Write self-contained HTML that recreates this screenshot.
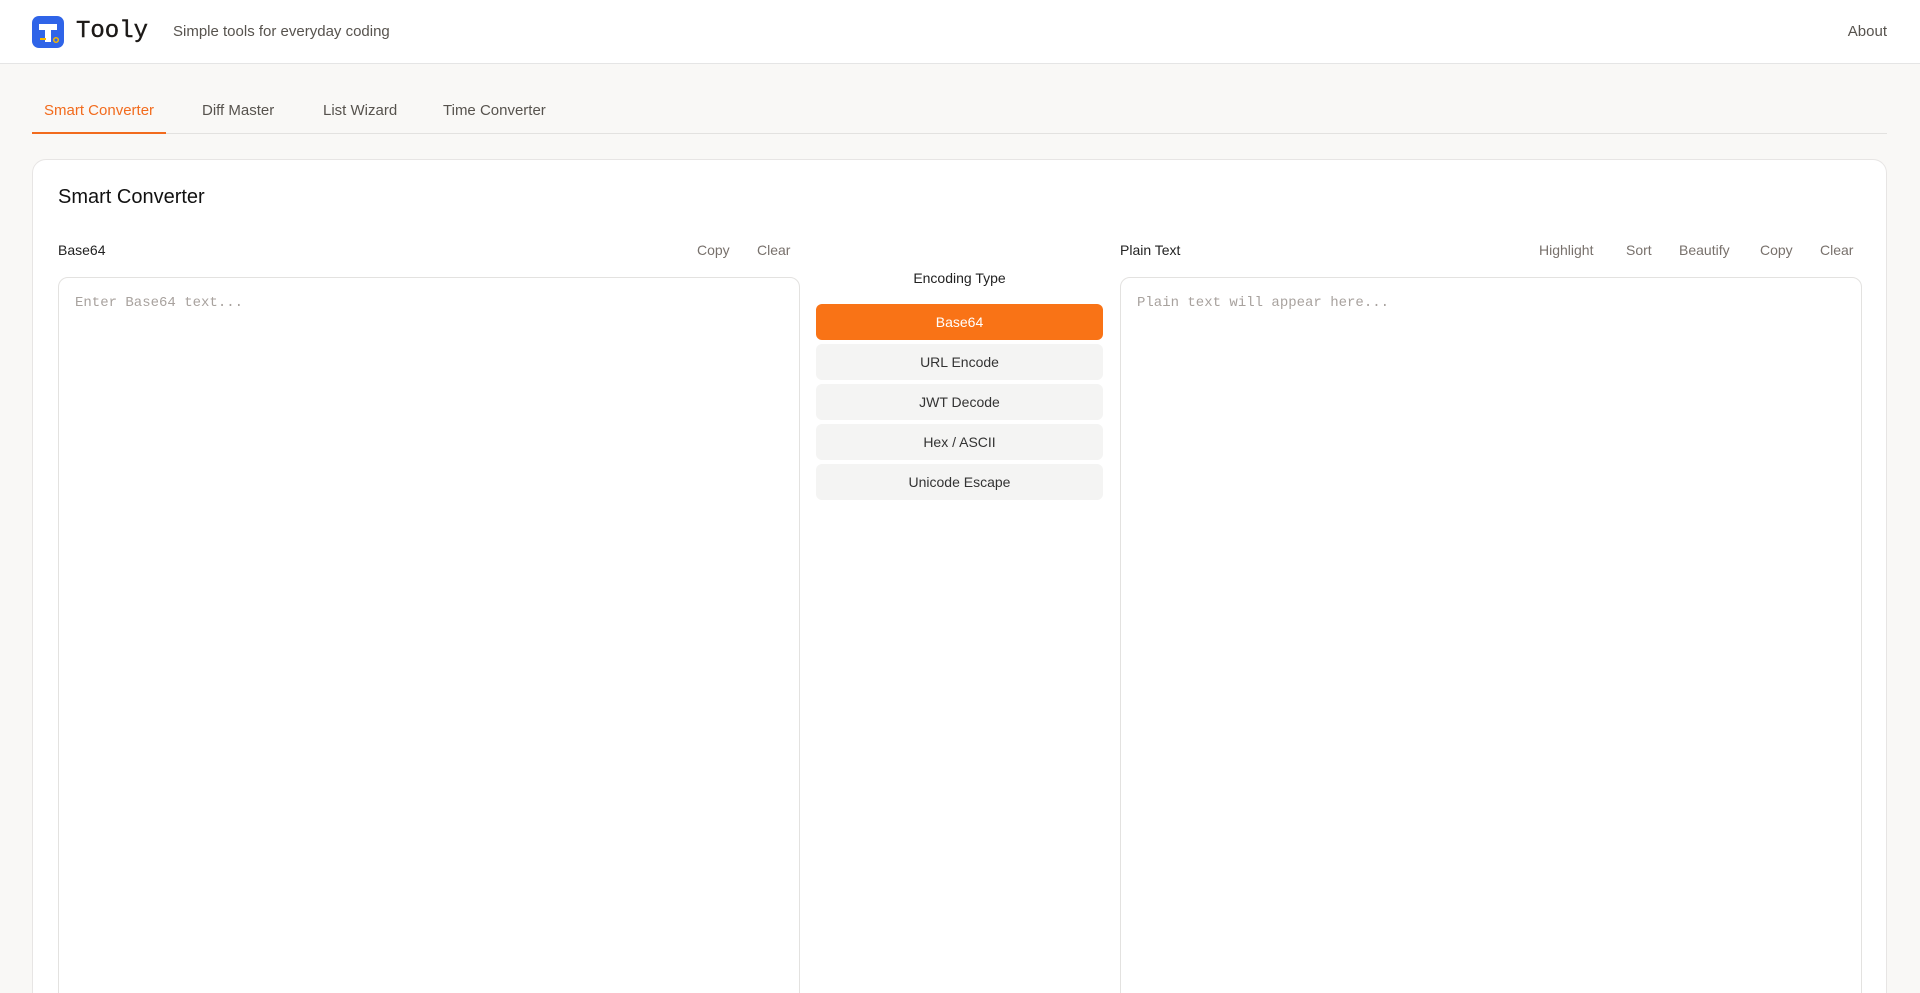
<!DOCTYPE html>
<html style="height:993px;overflow:hidden"><head><meta charset="utf-8"><style>
*{box-sizing:border-box;margin:0;padding:0}
body{width:1920px;height:993px;overflow:hidden;position:relative;background:#f9f8f6;font-family:"Liberation Sans",sans-serif;color:#1c1917}
.hdr{height:64px;background:#fff;border-bottom:1px solid #e5e5e5;position:relative}
.abs{position:absolute;white-space:nowrap}
.tabs{position:absolute;top:133px;left:32px;right:33px;border-top:1px solid #e3e2e0}
.card{position:absolute;left:32px;top:159px;width:1855px;height:860px;background:#fff;border:1px solid #e7e5e4;border-radius:14px}
.ta{position:absolute;top:277px;height:760px;background:#fff;border:1px solid #e3e2e0;border-radius:10px}
.ph{position:absolute;left:16px;top:17px;font-family:"Liberation Mono",monospace;font-size:14px;color:#a8a29e}
.btn{position:absolute;left:816px;width:287px;height:36px;border-radius:6px;background:#f4f4f3;color:#333;font-size:15px;text-align:center;line-height:36px}
.lbl{font-size:15px;color:#222}
.act{font-size:15px;color:#78716c}
</style></head><body>
<div class="hdr">
 <svg class="abs" style="left:32px;top:16px" width="32" height="32" viewBox="0 0 32 32"><rect width="32" height="32" rx="7" fill="#2f64e8"/><path d="M7 8h18v6h-6v12h-6V14H7z" fill="#fff"/><rect x="8" y="22" width="6" height="2" fill="#f5b800"/><circle cx="24" cy="24" r="2.3" fill="none" stroke="#f5b800" stroke-width="1.5"/></svg>
 <div class="abs" style="left:76px;top:18px;font-family:'Liberation Mono',monospace;font-size:24px;color:#1c1917;-webkit-text-stroke:0.4px #1c1917">Tooly</div>
 <div class="abs" style="left:173px;top:23px;font-size:15px;color:#57534e">Simple tools for everyday coding</div>
 <div class="abs" style="right:33px;top:23px;font-size:15px;color:#57534e">About</div>
</div>
<div class="abs" style="left:44px;top:102px;font-size:15px;color:#f26b1d">Smart Converter</div>
<div class="abs" style="left:202px;top:102px;font-size:15px;color:#57534e">Diff Master</div>
<div class="abs" style="left:323px;top:102px;font-size:15px;color:#57534e">List Wizard</div>
<div class="abs" style="left:443px;top:102px;font-size:15px;color:#57534e">Time Converter</div>
<div class="tabs"></div>
<div class="abs" style="left:32px;top:132px;width:134px;height:2px;background:#f26b1d"></div>
<div class="card"></div>
<div class="abs" style="left:58px;top:186px;font-size:20px;font-weight:500;color:#111">Smart Converter</div>
<div class="abs lbl" style="left:58px;top:242px;font-size:14px">Base64</div>
<div class="abs act" style="left:697px;top:242px;font-size:14px">Copy</div>
<div class="abs act" style="left:757px;top:242px;font-size:14px">Clear</div>
<div class="abs lbl" style="left:1120px;top:242px;font-size:14px">Plain Text</div>
<div class="abs act" style="left:1539px;top:242px;font-size:14px">Highlight</div>
<div class="abs act" style="left:1626px;top:242px;font-size:14px">Sort</div>
<div class="abs act" style="left:1679px;top:242px;font-size:14px">Beautify</div>
<div class="abs act" style="left:1760px;top:242px;font-size:14px">Copy</div>
<div class="abs act" style="left:1820px;top:242px;font-size:14px">Clear</div>
<div class="ta" style="left:58px;width:742px"><div class="ph">Enter Base64 text...</div></div>
<div class="ta" style="left:1120px;width:742px"><div class="ph">Plain text will appear here...</div></div>
<div class="abs lbl" style="left:816px;width:287px;text-align:center;top:270px;font-size:14px">Encoding Type</div>
<div class="btn" style="top:304px;background:#f97316;color:#fff;font-size:14px">Base64</div>
<div class="btn" style="top:344px;font-size:14px">URL Encode</div>
<div class="btn" style="top:384px;font-size:14px">JWT Decode</div>
<div class="btn" style="top:424px;font-size:14px">Hex / ASCII</div>
<div class="btn" style="top:464px;font-size:14px">Unicode Escape</div>
</body></html>
